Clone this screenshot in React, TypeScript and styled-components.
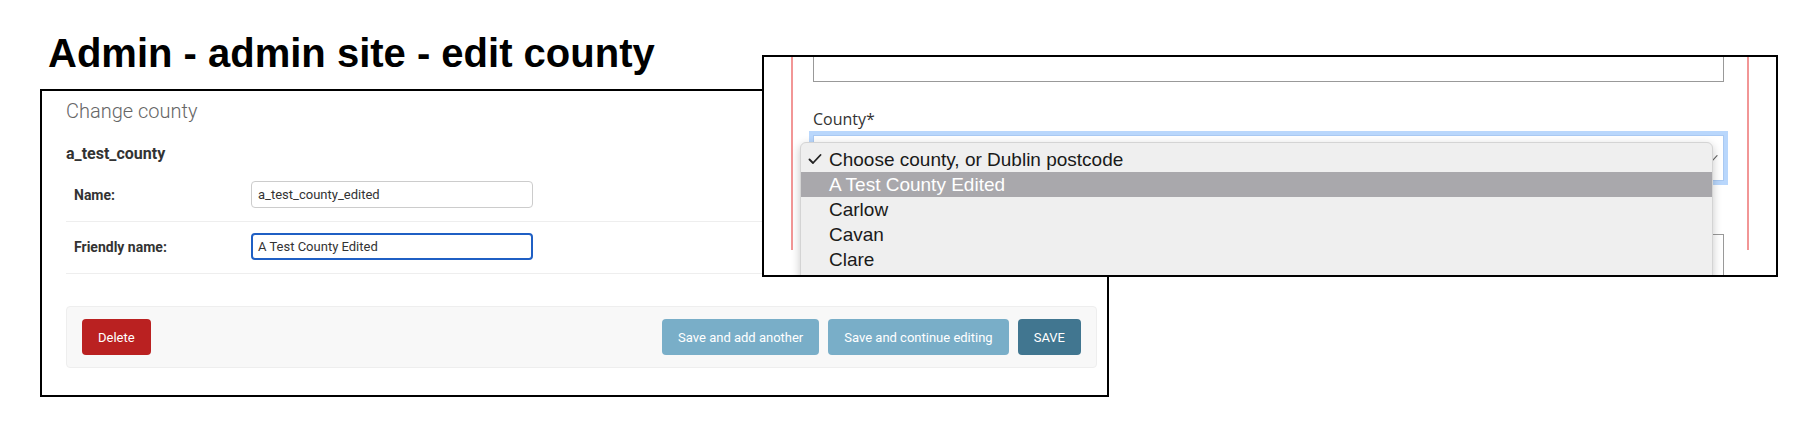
import { FC } from 'react'
import styled, { createGlobalStyle } from 'styled-components'

const GlobalStyle = createGlobalStyle`
  html, body {
    margin: 0;
    padding: 0;
    background: #fff;
  }
  * {
    box-sizing: border-box;
  }
`

const Page = styled.div`
  position: relative;
  width: 1810px;
  height: 424px;
  padding: 33px 0 0 40px;
  overflow: hidden;
`

const Title = styled.h1`
  margin: 0 0 0 8px;
  font-family: 'Liberation Sans', Arial, sans-serif;
  font-weight: 700;
  font-size: 40px;
  line-height: 40px;
  color: #000;
`

/* left screenshot: django admin change form */

const AdminShot = styled.div`
  margin-top: 16px;
  width: 1069px;
  height: 308px;
  border: 2px solid #000;
  padding: 8px 10px 0 24px;
  font-family: Roboto, 'Liberation Sans', sans-serif;
  color: #333;
`

const PageHeading = styled.h2`
  margin: 0;
  font-size: 20px;
  line-height: 24px;
  font-weight: 300;
  color: #666;
`

const ObjectName = styled.h3`
  margin: 21px 0 6px;
  font-size: 16px;
  line-height: 20px;
  font-weight: 700;
  color: #333;
`

const FormRow = styled.div`
  display: flex;
  align-items: center;
  padding: 11px 8px 13px;
  border-bottom: 1px solid #eee;
`

const Label = styled.label`
  width: 177px;
  font-size: 14px;
  font-weight: 700;
  color: #333;
`

const TextField = styled.div<{ focused?: boolean }>`
  display: flex;
  align-items: center;
  width: 282px;
  height: 27px;
  padding: 0 ${({ focused }) => (focused ? '5px' : '6px')};
  border: ${({ focused }) => (focused ? '2px solid #1f5fc4' : '1px solid #ccc')};
  border-radius: 4px;
  font-size: 13px;
  color: #333;
  background: #fff;
`

const SubmitRow = styled.div`
  display: flex;
  align-items: center;
  gap: 9px;
  margin-top: 32px;
  padding: 12px 15px;
  background: #f8f8f8;
  border: 1px solid #eee;
  border-radius: 4px;
`

const Spacer = styled.div`
  flex: 1;
`

const Button = styled.div<{ tone: string }>`
  display: inline-flex;
  align-items: center;
  height: 36px;
  padding: 0 16px;
  border-radius: 4px;
  background: ${({ tone }) => tone};
  color: #fff;
  font-size: 13px;
  line-height: 1;
`

/* right screenshot: public form with native select popup */

const FormShot = styled.div`
  position: absolute;
  left: 762px;
  top: 55px;
  width: 1016px;
  height: 222px;
  border: 2px solid #000;
  background: #fff;
  overflow: hidden;
`

const Sheet = styled.div`
  height: 100%;
  margin: 0 27px;
  padding: 0 23px 0 20px;
  border-left: 2px solid #f29696;
  border-right: 2px solid #f29696;
`

const PlainInput = styled.div<{ h: number }>`
  height: ${({ h }) => h}px;
  border: 1px solid #999;
  background: #fff;
`

const TopInput = styled(PlainInput)`
  margin-top: -25px;
`

const LowerInput = styled(PlainInput)`
  margin-top: 53px;
`

const FieldLabel = styled.div`
  margin-top: 27px;
  font-family: 'Open Sans', 'Liberation Sans', sans-serif;
  font-size: 16px;
  line-height: 20px;
  color: #333;
`

const SelectWrap = styled.div`
  position: relative;
  margin-top: 6px;
`

const SelectBox = styled.div`
  display: flex;
  align-items: center;
  justify-content: flex-end;
  height: 46px;
  padding-right: 5px;
  border: 1px solid #a9c9f2;
  box-shadow: 0 0 0 4px #b9d7fc;
  background: #fff;
`

const Popup = styled.div`
  position: absolute;
  top: 7px;
  left: -13px;
  right: 11px;
  min-height: 200px;
  padding-top: 4px;
  background: #efefef;
  border: 1px solid #d4d4d4;
  border-radius: 6px 6px 0 0;
  box-shadow: 0 3px 10px rgba(0, 0, 0, 0.22);
  font-family: 'Liberation Sans', Arial, sans-serif;
  font-size: 19px;
`

const Option = styled.div<{ active?: boolean }>`
  display: flex;
  align-items: center;
  height: 25px;
  padding-left: 7px;
  background: ${({ active }) => (active ? '#a9a8ac' : 'transparent')};
  color: ${({ active }) => (active ? '#fff' : '#1a1a1a')};
  white-space: nowrap;
`

const CheckSlot = styled.span`
  display: inline-flex;
  width: 21px;
`

const Check: FC<{ size?: number; color?: string }> = ({ size = 14, color = '#222' }) => (
  <svg width={size} height={size * 0.75} viewBox='0 0 14 10.5' fill='none'>
    <path d='M1.5 5.5 L5 9 L12.5 1' stroke={color} strokeWidth='1.8' strokeLinecap='round' strokeLinejoin='round' />
  </svg>
)

const counties = ['A Test County Edited', 'Carlow', 'Cavan', 'Clare']

export default function App() {
  return (
    <Page>
      <GlobalStyle />
      <Title>Admin - admin site - edit county</Title>

      <AdminShot>
        <PageHeading>Change county</PageHeading>
        <ObjectName>a_test_county</ObjectName>
        <FormRow>
          <Label>Name:</Label>
          <TextField>a_test_county_edited</TextField>
        </FormRow>
        <FormRow>
          <Label>Friendly name:</Label>
          <TextField focused>A Test County Edited</TextField>
        </FormRow>
        <SubmitRow>
          <Button tone='#ba2121'>Delete</Button>
          <Spacer />
          <Button tone='#79aec8'>Save and add another</Button>
          <Button tone='#79aec8'>Save and continue editing</Button>
          <Button tone='#417690'>SAVE</Button>
        </SubmitRow>
      </AdminShot>

      <FormShot>
        <Sheet>
          <TopInput h={50} />
          <FieldLabel>County*</FieldLabel>
          <SelectWrap>
            <SelectBox>
              <Check size={9} color='#666' />
            </SelectBox>
            <Popup>
              <Option>
                <CheckSlot>
                  <Check />
                </CheckSlot>
                Choose county, or Dublin postcode
              </Option>
              {counties.map((c, i) => (
                <Option key={c} active={i === 0}>
                  <CheckSlot />
                  {c}
                </Option>
              ))}
            </Popup>
          </SelectWrap>
          <LowerInput h={60} />
        </Sheet>
      </FormShot>
    </Page>
  )
}
